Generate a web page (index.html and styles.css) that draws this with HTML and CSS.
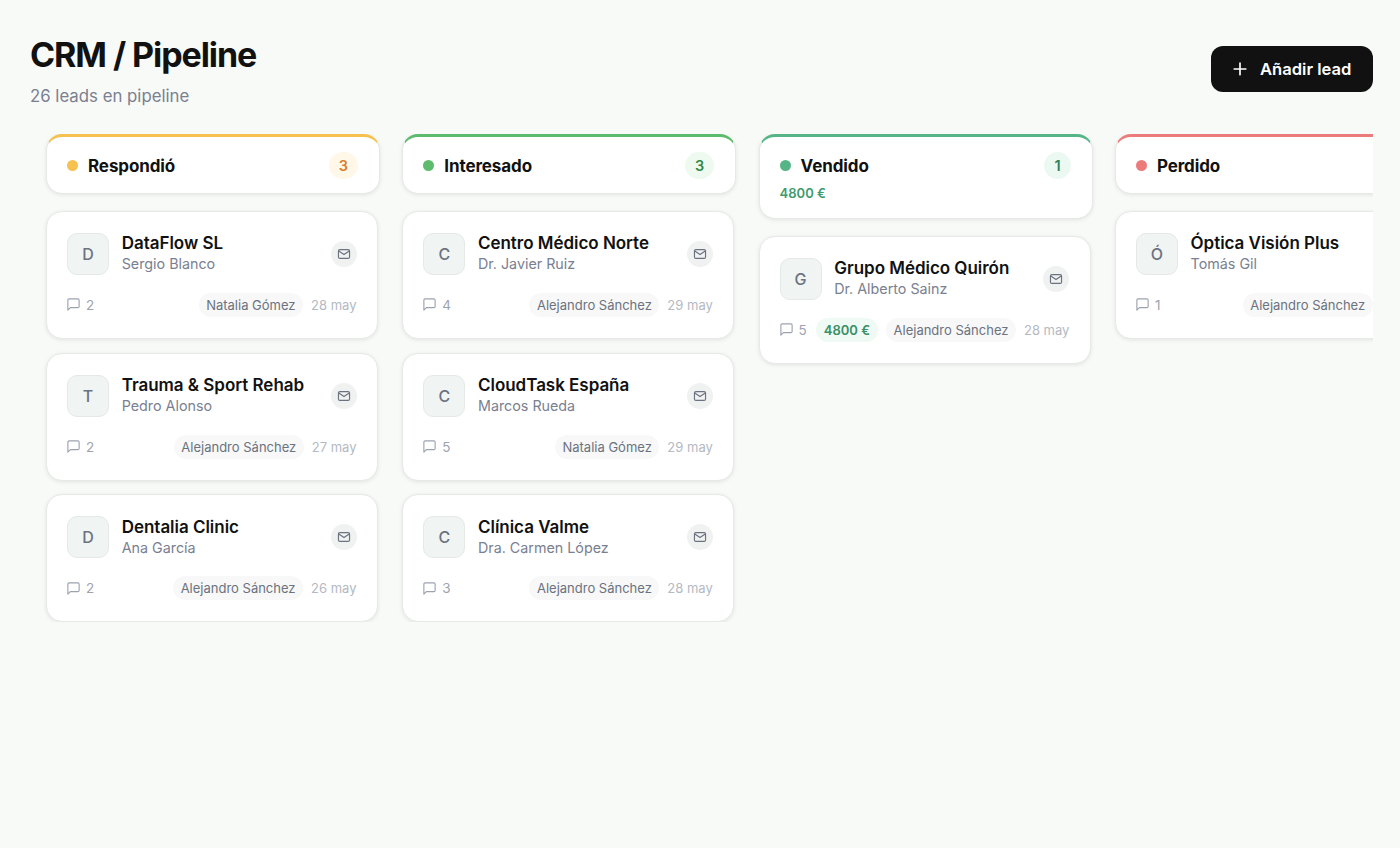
FILE: index.html
```html
<!DOCTYPE html>
<html lang="es">
<head>
<meta charset="utf-8">
<title>CRM / Pipeline</title>
<link rel="stylesheet" href="styles.css">
</head>
<body>
<svg class="defs" width="0" height="0" aria-hidden="true">
  <symbol id="mail" viewBox="0 0 24 24"><rect x="2.5" y="4.5" width="19" height="15" rx="2.5" fill="none" stroke="currentColor" stroke-width="2"/><path d="M3 7l9 6 9-6" fill="none" stroke="currentColor" stroke-width="2" stroke-linecap="round" stroke-linejoin="round"/></symbol>
  <symbol id="chat" viewBox="0 0 24 24"><path d="M21 15a2 2 0 0 1-2 2H7l-4 4V5a2 2 0 0 1 2-2h14a2 2 0 0 1 2 2z" fill="none" stroke="currentColor" stroke-width="1.8" stroke-linecap="round" stroke-linejoin="round"/></symbol>
</svg>
<main class="page">
  <header class="top">
    <div>
      <h1 class="title">CRM / Pipeline</h1>
      <p class="subtitle">26 leads en pipeline</p>
    </div>
    <button class="add">
      <svg class="plus" viewBox="0 0 24 24"><path d="M12 5v14M5 12h14" fill="none" stroke="currentColor" stroke-width="2" stroke-linecap="round"/></svg>
      Añadir lead
    </button>
  </header>
  <div class="board">

    <section class="col">
      <div class="head yellow">
        <div class="head-row"><span class="dot"></span><span class="stage">Respondió</span><span class="count">3</span></div>
      </div>
      <article class="card">
        <div class="main"><div class="avatar">D</div><div class="who"><div class="name">DataFlow SL</div><div class="contact">Sergio Blanco</div></div><span class="mailbtn"><svg class="i-mail"><use href="#mail"/></svg></span></div>
        <div class="foot"><span class="notes"><svg class="i-chat"><use href="#chat"/></svg>2</span><span class="owner">Natalia Gómez</span><span class="date">28 may</span></div>
      </article>
      <article class="card">
        <div class="main"><div class="avatar">T</div><div class="who"><div class="name">Trauma &amp; Sport Rehab</div><div class="contact">Pedro Alonso</div></div><span class="mailbtn"><svg class="i-mail"><use href="#mail"/></svg></span></div>
        <div class="foot"><span class="notes"><svg class="i-chat"><use href="#chat"/></svg>2</span><span class="owner">Alejandro Sánchez</span><span class="date">27 may</span></div>
      </article>
      <article class="card">
        <div class="main"><div class="avatar">D</div><div class="who"><div class="name">Dentalia Clinic</div><div class="contact">Ana García</div></div><span class="mailbtn"><svg class="i-mail"><use href="#mail"/></svg></span></div>
        <div class="foot"><span class="notes"><svg class="i-chat"><use href="#chat"/></svg>2</span><span class="owner">Alejandro Sánchez</span><span class="date">26 may</span></div>
      </article>
    </section>

    <section class="col">
      <div class="head green">
        <div class="head-row"><span class="dot"></span><span class="stage">Interesado</span><span class="count">3</span></div>
      </div>
      <article class="card">
        <div class="main"><div class="avatar">C</div><div class="who"><div class="name">Centro Médico Norte</div><div class="contact">Dr. Javier Ruiz</div></div><span class="mailbtn"><svg class="i-mail"><use href="#mail"/></svg></span></div>
        <div class="foot"><span class="notes"><svg class="i-chat"><use href="#chat"/></svg>4</span><span class="owner">Alejandro Sánchez</span><span class="date">29 may</span></div>
      </article>
      <article class="card">
        <div class="main"><div class="avatar">C</div><div class="who"><div class="name">CloudTask España</div><div class="contact">Marcos Rueda</div></div><span class="mailbtn"><svg class="i-mail"><use href="#mail"/></svg></span></div>
        <div class="foot"><span class="notes"><svg class="i-chat"><use href="#chat"/></svg>5</span><span class="owner">Natalia Gómez</span><span class="date">29 may</span></div>
      </article>
      <article class="card">
        <div class="main"><div class="avatar">C</div><div class="who"><div class="name">Clínica Valme</div><div class="contact">Dra. Carmen López</div></div><span class="mailbtn"><svg class="i-mail"><use href="#mail"/></svg></span></div>
        <div class="foot"><span class="notes"><svg class="i-chat"><use href="#chat"/></svg>3</span><span class="owner">Alejandro Sánchez</span><span class="date">28 may</span></div>
      </article>
    </section>

    <section class="col">
      <div class="head teal">
        <div class="head-row"><span class="dot"></span><span class="stage">Vendido</span><span class="count">1</span></div>
        <div class="total">4800 €</div>
      </div>
      <article class="card">
        <div class="main"><div class="avatar">G</div><div class="who"><div class="name">Grupo Médico Quirón</div><div class="contact">Dr. Alberto Sainz</div></div><span class="mailbtn"><svg class="i-mail"><use href="#mail"/></svg></span></div>
        <div class="foot"><span class="notes notes-tight"><svg class="i-chat"><use href="#chat"/></svg>5</span><span class="amount">4800 €</span><span class="owner">Alejandro Sánchez</span><span class="date">28 may</span></div>
      </article>
    </section>

    <section class="col">
      <div class="head red">
        <div class="head-row"><span class="dot"></span><span class="stage">Perdido</span><span class="count">1</span></div>
      </div>
      <article class="card">
        <div class="main"><div class="avatar">Ó</div><div class="who"><div class="name">Óptica Visión Plus</div><div class="contact">Tomás Gil</div></div><span class="mailbtn"><svg class="i-mail"><use href="#mail"/></svg></span></div>
        <div class="foot"><span class="notes"><svg class="i-chat"><use href="#chat"/></svg>1</span><span class="owner">Alejandro Sánchez</span><span class="date">27 may</span></div>
      </article>
    </section>

  </div>
</main>
</body>
</html>
```
FILE: styles.css
```css
* { box-sizing: border-box; }
html, body { margin: 0; height: 100%; overflow: hidden; }
body { background: #f8faf8; font-family: Inter, "Liberation Sans", sans-serif; color: #111; }
.defs { position: absolute; }
.page { padding: 32px 27px 0 30px; }
.top { display: flex; justify-content: space-between; align-items: flex-start; height: 76px; margin-bottom: 26px; }
.title { margin: 0; font-size: 34px; line-height: 46px; font-weight: 700; letter-spacing: -1.07px; color: #111; }
.subtitle { margin: 7px 0 0; font-size: 16.8px; line-height: 23px; color: #7a8090; }
.add { display: flex; align-items: center; gap: 10px; width: 162px; height: 46px; margin-top: 14px; padding: 0 0 0 19px; border: 0; border-radius: 12px; background: #111; color: #fff; font: 600 16.6px Inter, sans-serif; }
.plus { width: 20px; height: 20px; }
.board { display: flex; gap: 22.3px; padding-left: 16px; overflow: hidden; align-items: flex-start; }
.col { flex: 0 0 334px; width: 334px; display: flex; flex-direction: column; gap: 13.6px; }
.head { margin-bottom: 3.4px; padding: 15px 21px 14px 20px; background: #fff; border: 1px solid #e6e9e6; border-top: 3px solid; border-radius: 16px; box-shadow: 0 1px 4px rgba(0,0,0,.09); }
.head-row { display: flex; align-items: center; height: 27px; }
.dot { width: 11px; height: 11px; border-radius: 50%; margin-right: 10px; }
.stage { flex: 1; font-size: 17px; font-weight: 700; letter-spacing: -0.1px; }
.count { min-width: 26px; height: 27px; padding: 0 10px; border-radius: 14px; display: flex; align-items: center; justify-content: center; font-size: 14.5px; font-weight: 600; }
.total { margin-top: 5px; margin-bottom: 1px; font-size: 13px; line-height: 19px; font-weight: 600; color: #3f9b6e; }
.yellow { border-top-color: #f6c14f; } .yellow .dot { background: #f6c14f; } .yellow .count { background: #fff8e8; color: #d97f2c; }
.green { border-top-color: #5cbb6c; } .green .dot { background: #5cbb6c; } .green .count { background: #eefaf0; color: #2f8a4a; }
.teal { border-top-color: #55b586; } .teal .dot { background: #55b586; } .teal .count { background: #ecf9f2; color: #2f7f58; }
.red { border-top-color: #ec7c7c; } .red .dot { background: #ec7c7c; } .red .count { background: #fdeeee; color: #c94b4b; }
.card { width: 332px; height: 128px; padding: 21px 20.5px 0 20px; background: #fff; border: 1px solid #e6e9e6; border-radius: 16px; box-shadow: 0 1px 4px rgba(0,0,0,.09); }
.main { display: flex; align-items: center; height: 42px; }
.avatar { flex: none; width: 42px; height: 42px; border: 1px solid #e4e9e6; border-radius: 10px; background: #f0f4f2; display: flex; align-items: center; justify-content: center; font-size: 16px; font-weight: 500; color: #6b7280; }
.who { flex: 1; min-width: 0; margin-left: 12.7px; }
.name { font-size: 17px; line-height: 21px; font-weight: 600; color: #111; white-space: nowrap; letter-spacing: -0.03px; }
.contact { margin-top: -1px; font-size: 14.3px; line-height: 21px; color: #7a8090; white-space: nowrap; }
.mailbtn { flex: none; width: 26px; height: 26px; border-radius: 50%; background: #f0f2f1; color: #6b7280; display: flex; align-items: center; justify-content: center; }
.i-mail { width: 14px; height: 14px; }
.foot { display: flex; align-items: center; gap: 8px; height: 26px; margin-top: 17px; font-size: 13px; color: #9ca3af; }
.notes { display: flex; align-items: center; gap: 5px; margin-right: auto; font-size: 13.5px; }
.notes-tight { margin-right: 1px; }
.i-chat { width: 15px; height: 15px; margin-left: -1px; }
.owner { padding: 0 7.5px; height: 24px; line-height: 24px; border-radius: 12px; background: #f7f8f7; color: #6b7280; white-space: nowrap; }
.date { color: #b4b9c2; white-space: nowrap; }
.amount { padding: 0 8px; height: 24px; line-height: 24px; border-radius: 12px; background: #eefaf3; color: #3a8f66; font-weight: 600; white-space: nowrap; }
```
